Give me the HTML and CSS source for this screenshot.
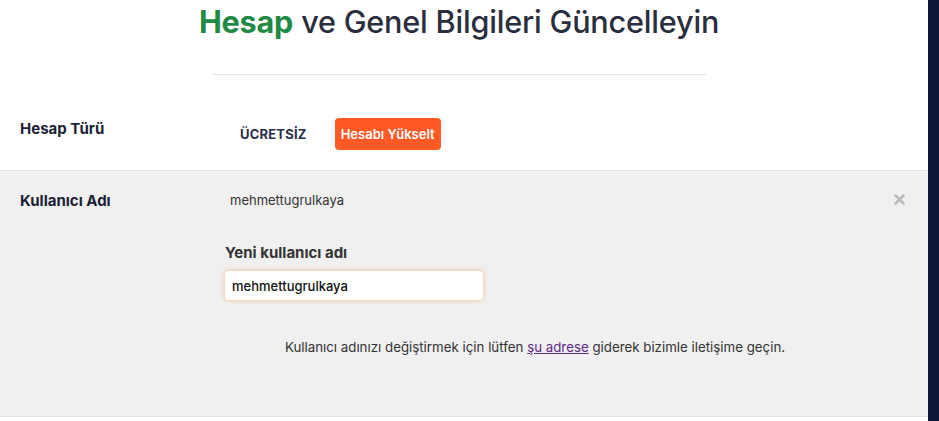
FILE: index.html
```html
<!DOCTYPE html>
<html lang="tr">
<head>
<meta charset="utf-8">
<link rel="stylesheet" href="styles.css">
</head>
<body>
<div class="page">
  <main class="main">
    <header class="header">
      <h1 class="title"><span class="accent">Hesap</span> ve Genel Bilgileri Güncelleyin</h1>
      <div class="divider"></div>
    </header>
    <section class="row row-type">
      <div class="label">Hesap Türü</div>
      <div class="type-value">
        <span class="plan">ÜCRETSİZ</span>
        <button class="upgrade">Hesabı Yükselt</button>
      </div>
    </section>
    <section class="row row-user">
      <div class="label">Kullanıcı Adı</div>
      <div class="user-col">
        <div class="current">mehmettugrulkaya</div>
        <div class="field-label">Yeni kullanıcı adı</div>
        <input class="input" type="text" value="mehmettugrulkaya">
        <p class="help">Kullanıcı adınızı değiştirmek için lütfen <a href="#" class="link">şu adrese</a> giderek bizimle iletişime geçin.</p>
      </div>
      <svg class="close" width="11" height="11" viewBox="0 0 11 11"><path d="M1.5 1.5 L9.5 9.5 M9.5 1.5 L1.5 9.5" stroke="#bcbcbc" stroke-width="2.6" stroke-linecap="round"/></svg>
    </section>
  </main>
  <aside class="strip"></aside>
</div>
</body>
</html>
```
FILE: styles.css
```css
* { box-sizing: border-box; }
html, body { margin: 0; padding: 0; height: 100%; }
body {
  font-family: "Inter", "Noto Sans", sans-serif;
  color: #2a2e3d;
  background: #fff;
}
.page {
  display: flex;
  min-height: 421px;
}
.main {
  flex: 1;
  display: flex;
  flex-direction: column;
}
.strip {
  width: 11px;
  background: #0f1638;
}
.header {
  display: flex;
  flex-direction: column;
  align-items: center;
  padding-top: 2px;
  padding-right: 10px;
}
.title {
  margin: 0;
  font-size: 30.6px;
  font-weight: 500;
  line-height: 40px;
  color: #2a2e3d;
  letter-spacing: -0.2px;
}
.accent { color: #1e8a43; font-weight: 700; }
.divider {
  width: 494px;
  height: 1px;
  background: #e2e4e8;
  margin-top: 32px;
}
.row {
  display: flex;
  position: relative;
  padding-left: 20px;
}
.label {
  width: 205px;
  font-size: 15px;
  font-weight: 700;
  color: #1b1f36;
}
.row-type {
  height: 96px;
  padding-top: 44px;
  border-bottom: 1px solid #e2e2e8;
}
.type-value {
  display: flex;
  align-items: center;
  gap: 28px;
  margin-top: -1px;
  height: 32px;
  padding-left: 15px;
}
.plan {
  font-size: 13px;
  font-weight: 700;
  color: #2a2e4a;
  letter-spacing: 0.2px;
}
.upgrade {
  font-family: inherit;
  font-size: 13px;
  font-weight: 600;
  color: #fff;
  background: #ff5a26;
  border: none;
  border-radius: 4px;
  width: 106px;
  height: 32px;
  padding: 0;
}
.row-user {
  background: #f0f0f0;
  height: 246px;
  border-bottom: 1px solid #e0e0e6;
  padding-top: 20px;
}
.user-col {
  display: flex;
  flex-direction: column;
  align-items: flex-start;
  width: 620px;
}
.current {
  font-size: 13px;
  color: #333;
  padding-left: 5px;
  line-height: 18px;
}
.field-label {
  margin-top: 34px;
  font-size: 15px;
  font-weight: 700;
  color: #333;
}
.input {
  margin-top: 9px;
  width: 258px;
  height: 29px;
  border: none;
  border-radius: 4px;
  background: #fff;
  font-family: inherit;
  font-size: 13px;
  font-weight: 500;
  color: #111;
  padding: 0 7px;
  box-shadow: 0 0 4px 1px rgba(240, 170, 100, 0.55);
  outline: none;
}
.help {
  align-self: stretch;
  text-align: center;
  margin: 39px 0 0 0;
  font-size: 13.3px;
  color: #333;
}
.link { color: #5b2a86; text-decoration: underline; }
.close {
  position: absolute;
  right: 23px;
  top: 23px;
}
```
